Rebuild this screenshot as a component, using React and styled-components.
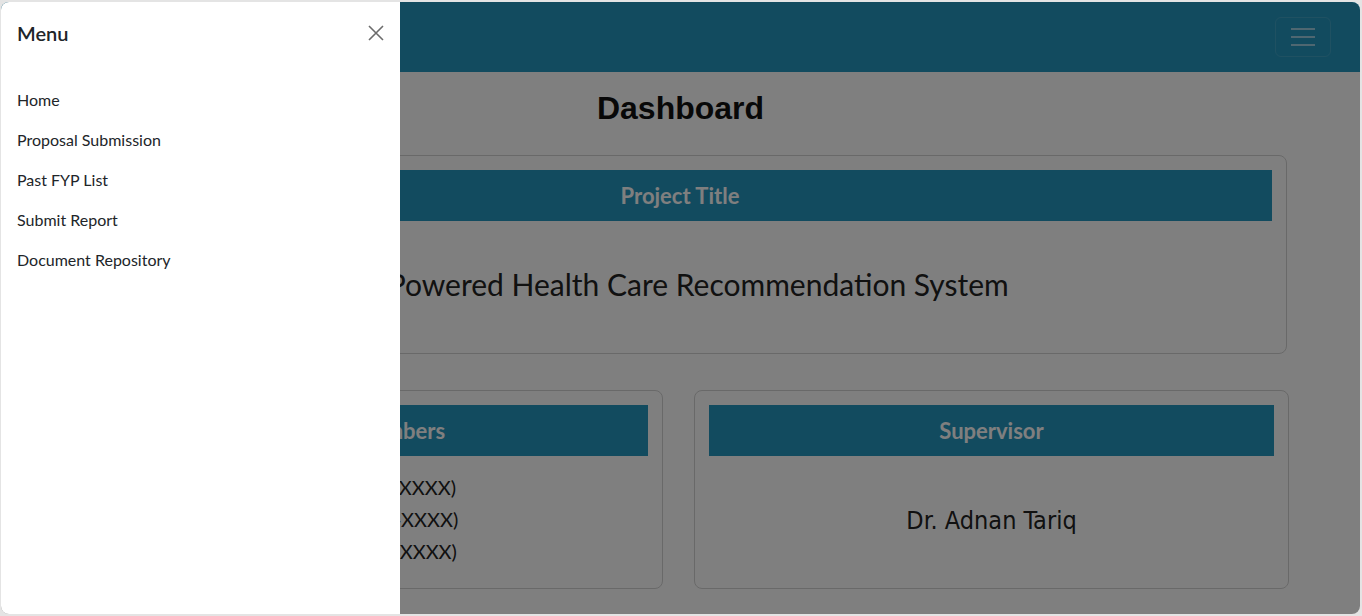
import React from 'react'
import styled, { createGlobalStyle } from 'styled-components'

const GlobalStyle = createGlobalStyle`
  * { box-sizing: border-box; }
  html, body { margin: 0; padding: 0; }
  body {
    background: #e4e4e4;
    padding: 2px 2px 2px 1px;
    font-family: "Segoe UI", Lato, "Noto Sans", sans-serif;
    color: #212529;
    overflow: hidden;
  }
`

const members = [
  'Ali Raza (BCS-XXXX)',
  'Ali Khan (BCS-XXXX)',
  'Ali Shah (BCS-XXXX)',
]

const links = ['Home', 'Proposal Submission', 'Past FYP List', 'Submit Report', 'Document Repository']

const App = () => {
  return (
    <>
      <GlobalStyle />
      <StyledWindow>
        <Navbar>
          <Toggler aria-label='Toggle navigation'>
            <span />
            <span />
            <span />
          </Toggler>
        </Navbar>

        <Main>
          <Heading>Dashboard</Heading>
          <Content>
            <Card $wide>
              <CardHeader>Project Title</CardHeader>
              <TitleBody>AI Powered Health Care Recommendation System</TitleBody>
            </Card>
            <CardRow>
              <Card>
                <CardHeader>Group Members</CardHeader>
                <MemberList>
                  {members.map(m => <li key={m}>{m}</li>)}
                </MemberList>
              </Card>
              <Card>
                <CardHeader>Supervisor</CardHeader>
                <SupervisorBody>Dr. Adnan Tariq</SupervisorBody>
              </Card>
            </CardRow>
          </Content>
        </Main>

        <Backdrop />

        <Offcanvas>
          <OffcanvasHeader>
            <h5>Menu</h5>
            <CloseButton aria-label='Close'>
              <svg width='16' height='16' viewBox='0 0 16 16'>
                <path d='M1 1 L15 15 M15 1 L1 15' stroke='#6c6c6c' strokeWidth='1.6' fill='none' />
              </svg>
            </CloseButton>
          </OffcanvasHeader>
          <OffcanvasBody>
            {links.map(l => <NavLink key={l} href='#'>{l}</NavLink>)}
          </OffcanvasBody>
        </Offcanvas>
      </StyledWindow>
    </>
  )
}

const StyledWindow = styled.div`
  position: relative;
  width: 1359px;
  height: 612px;
  border-radius: 8px;
  overflow: hidden;
  background: #fff;
`

const Navbar = styled.nav`
  height: 70px;
  background: #2496be;
  display: flex;
  align-items: center;
  justify-content: flex-end;
  padding: 0 29px;
`

const Toggler = styled.button`
  width: 56px;
  height: 40px;
  border: 1px solid rgba(255, 255, 255, 0.12);
  border-radius: 6px;
  background: transparent;
  display: flex;
  flex-direction: column;
  align-items: center;
  justify-content: center;
  gap: 6px;
  padding: 0;

  span {
    display: block;
    width: 24px;
    height: 2px;
    background: rgba(255, 255, 255, 0.55);
  }
`

const Main = styled.main`
  padding-top: 17px;
`

const Heading = styled.h1`
  margin: 0 0 28px;
  text-align: center;
  font-family: "Liberation Sans", Arial, sans-serif;
  font-size: 32px;
  font-weight: 700;
  line-height: 38px;
  color: #111;
`

const Content = styled.div`
  width: 1221px;
  margin-left: 67px;
  display: flex;
  flex-direction: column;
  gap: 36px;
`

const Card = styled.div`
  height: 199px;
  border: 1px solid #d2d2d2;
  border-radius: 8px;
  padding: 14px 14px;
  display: flex;
  flex-direction: column;
  ${p => p.$wide && 'margin: 0 2px 0 5px;'}
`

const CardHeader = styled.div`
  height: 51px;
  flex-shrink: 0;
  background: #2496be;
  color: #fff;
  font-size: 22px;
  font-weight: 700;
  display: flex;
  align-items: center;
  justify-content: center;
`

const TitleBody = styled.div`
  padding-top: 44px;
  text-align: center;
  font-size: 30px;
  line-height: 38px;
  color: #222;
`

const CardRow = styled.div`
  display: grid;
  grid-template-columns: 1fr 1fr;
  gap: 31px;
`

const MemberList = styled.ul`
  list-style: none;
  margin: 0;
  padding: 15px 0 0;
  text-align: center;
  font-size: 20px;
  line-height: 32px;
  color: #222;
`

const SupervisorBody = styled.div`
  flex: 1;
  display: flex;
  align-items: center;
  justify-content: center;
  padding-top: 10px;
  font-family: "Liberation Sans Narrow", "DejaVu Sans Condensed", "Segoe UI", Lato, sans-serif;
  font-size: 25px;
  color: #222;
`

const Backdrop = styled.div`
  position: absolute;
  inset: 0;
  background: rgba(0, 0, 0, 0.5);
`

const Offcanvas = styled.aside`
  position: absolute;
  top: 0;
  left: 0;
  bottom: 0;
  width: 399px;
  background: #fff;
  display: flex;
  flex-direction: column;
`

const OffcanvasHeader = styled.div`
  height: 62px;
  padding: 0 16px;
  display: flex;
  align-items: center;
  justify-content: space-between;

  h5 {
    margin: 0;
    font-size: 20px;
    font-weight: 600;
    color: #212529;
  }
`

const CloseButton = styled.button`
  width: 32px;
  height: 32px;
  border: none;
  background: transparent;
  padding: 0;
  margin-right: -8px;
  display: flex;
  align-items: center;
  justify-content: center;
`

const OffcanvasBody = styled.div`
  padding: 16px 16px;
  display: flex;
  flex-direction: column;
`

const NavLink = styled.a`
  display: block;
  padding: 8px 0;
  font-size: 16px;
  line-height: 24px;
  color: #212529;
  text-decoration: none;
`

export default App
